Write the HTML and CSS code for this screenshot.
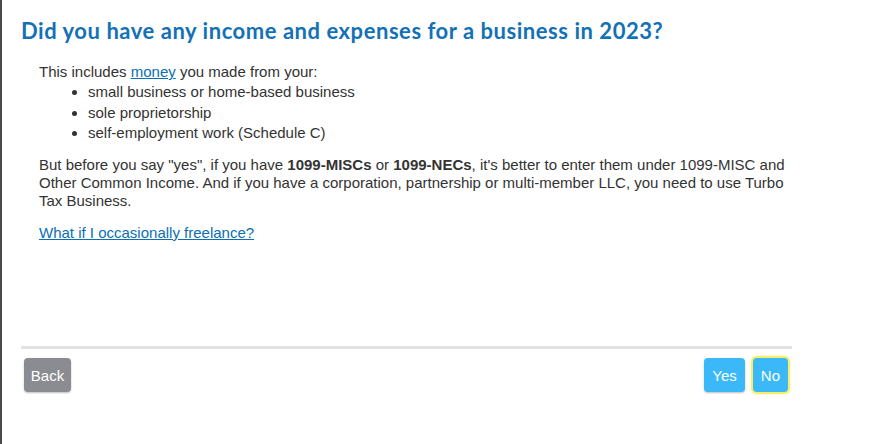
FILE: index.html
```html
<!DOCTYPE html>
<html lang="en">
<head>
<meta charset="utf-8">
<title>Business income</title>
<link rel="stylesheet" href="styles.css">
</head>
<body>
<div class="page">
  <main class="content">
    <h1 class="title">Did you have any income and expenses for a business in 2023?</h1>
    <div class="body">
      <p class="intro">This includes <a href="#" class="link">money</a> you made from your:</p>
      <ul class="list">
        <li>small business or home-based business</li>
        <li>sole proprietorship</li>
        <li>self-employment work (Schedule C)</li>
      </ul>
      <p class="para">But before you say "yes", if you have <b>1099-MISCs</b> or <b>1099-NECs</b>, it's better to enter them under 1099-MISC and Other Common Income. And if you have a corporation, partnership or multi-member LLC, you need to use Turbo Tax Business.</p>
      <p class="para para-link"><a href="#" class="link">What if I occasionally freelance?</a></p>
    </div>
    <div class="footer">
      <button class="btn btn-back">Back</button>
      <div class="actions">
        <button class="btn btn-primary">Yes</button>
        <button class="btn btn-primary btn-focus">No</button>
      </div>
    </div>
  </main>
</div>
</body>
</html>
```

FILE: styles.css
```css
html, body {
  margin: 0;
  padding: 0;
  background: #fff;
}
body {
  font-family: "Liberation Sans", Arial, sans-serif;
  color: #333;
}
.page {
  min-height: 444px;
  border-left: 2px solid #4a4a4a;
  box-sizing: border-box;
}
.content {
  width: 771px;
  margin-left: 19px;
  padding-top: 17px;
}
.title {
  margin: 0;
  font-family: "Lato", "Open Sans", sans-serif;
  font-weight: 700;
  font-size: 22px;
  line-height: 28px;
  color: #1371b6;
  letter-spacing: 0.54px;
}
.body {
  padding-left: 18px;
  padding-top: 17px;
  font-size: 15px;
  min-height: 301px;
  box-sizing: border-box;
}
.intro {
  margin: 0;
  line-height: 20px;
}
.list {
  margin: 0;
  padding-left: 49px;
  line-height: 20.5px;
  list-style: disc;
}
.para {
  margin: 12px 0 0;
  line-height: 18px;
  padding-right: 0;
}
.para-link {
  margin-top: 14px;
}
.link {
  color: #0a6fb4;
  text-decoration: underline;
}
.footer {
  border-top: 3px solid #e2e2e2;
  padding: 9px 4px 0 3px;
  display: flex;
  justify-content: space-between;
  align-items: flex-start;
}
.actions {
  display: flex;
  gap: 8px;
}
.btn {
  font-family: "Liberation Sans", Arial, sans-serif;
  font-size: 15px;
  color: #fff;
  border: none;
  border-radius: 4px;
  height: 34px;
  padding: 0 8px;
  box-shadow: 0 1px 2px rgba(0,0,0,0.25);
}
.btn-back {
  background: #8b8c91;
  width: 47px;
  padding: 0;
}
.btn-primary {
  background: #3ab8f7;
}
.btn-focus {
  box-shadow: 0 0 0 2px #f4ee6c, 0 0 3px 2px rgba(240, 230, 90, 0.6);
}
```
